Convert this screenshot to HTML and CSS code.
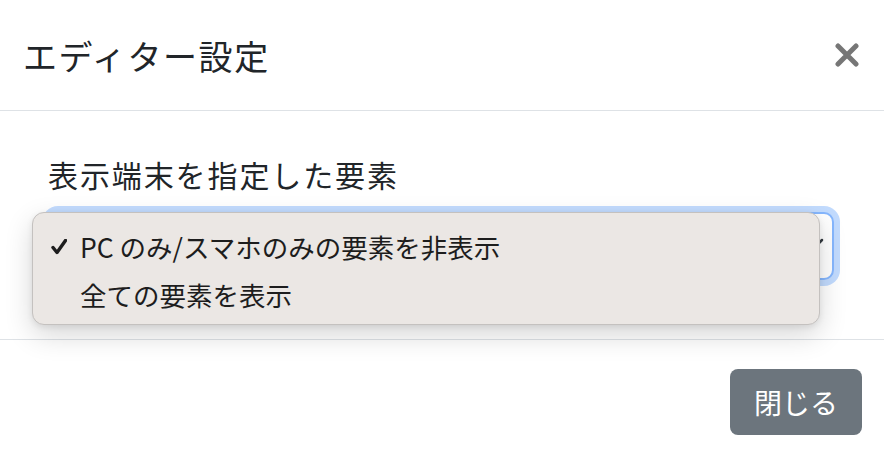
FILE: index.html
```html
<!DOCTYPE html>
<html lang="ja">
<head>
<meta charset="utf-8">
<title>エディター設定</title>
<link rel="stylesheet" href="styles.css">
</head>
<body>
<div class="modal">
  <div class="modal-header">
    <h5 class="modal-title">エディター設定</h5>
    <button class="btn-close" type="button" aria-label="Close">
      <svg viewBox="0 0 24 24" width="24" height="24"><path d="M3 3L21 21M21 3L3 21"/></svg>
    </button>
  </div>
  <div class="modal-body">
    <label class="form-label">表示端末を指定した要素</label>
    <div class="select-wrap">
      <div class="form-select">
        <svg class="chevron" viewBox="0 0 20 12" width="20" height="12"><path d="M2 2l8 8 8-8"/></svg>
      </div>
      <div class="popup">
        <div class="option selected">
          <svg class="check" viewBox="0 0 16 16" width="16" height="16"><path d="M2 8.5l4 5L14.5 1.5"/></svg>
          <span>PC のみ/スマホのみの要素を非表示</span>
        </div>
        <div class="option">
          <span>全ての要素を表示</span>
        </div>
      </div>
    </div>
  </div>
  <div class="modal-footer">
    <button class="btn-secondary" type="button">閉じる</button>
  </div>
</div>
</body>
</html>
```
FILE: styles.css
```css
html, body {
  margin: 0;
  padding: 0;
  background: #fff;
}
body {
  font-family: "Noto Sans CJK JP", "Noto Sans", sans-serif;
  color: #212529;
}
.modal {
  width: 884px;
  height: 464px;
  display: flex;
  flex-direction: column;
}
.modal-header {
  height: 111px;
  box-sizing: border-box;
  border-bottom: 1px solid #dee2e6;
  display: flex;
  align-items: center;
  justify-content: space-between;
  padding: 0 25px 0 23px;
}
.modal-title {
  margin: 0;
  font-size: 34px;
  font-weight: 400;
  letter-spacing: 1.6px;
  line-height: 1.2;
  padding-top: 2px;
}
.btn-close {
  border: 0;
  background: transparent;
  padding: 0;
  width: 24px;
  height: 24px;
  display: flex;
}
.btn-close svg {
  fill: none;
  stroke: #767676;
  stroke-width: 5;
  stroke-linecap: round;
}
.modal-body {
  height: 228px;
  box-sizing: border-box;
  padding: 40px 50px 0 48px;
}
.form-label {
  display: block;
  font-size: 30px;
  letter-spacing: 1.9px;
  line-height: 46px;
  margin-bottom: 15px;
}
.select-wrap {
  position: relative;
}
.form-select {
  height: 68px;
  box-sizing: border-box;
  border: 2px solid #86b7fe;
  border-radius: 10px;
  background: #fff;
  box-shadow: 0 0 0 6px rgba(13, 110, 253, .25);
  display: flex;
  align-items: center;
  justify-content: flex-end;
  padding-right: 8px;
}
.chevron {
  fill: none;
  stroke: #343a40;
  stroke-width: 2.5;
  stroke-linecap: round;
  stroke-linejoin: round;
  margin-top: -4px;
}
.popup {
  position: absolute;
  left: -16px;
  top: 0;
  width: 788px;
  height: 113px;
  box-sizing: border-box;
  background: #ebe7e4;
  border: 1px solid #c4c1bf;
  border-radius: 12px;
  box-shadow: 0 10px 28px rgba(0, 0, 0, .16), 0 2px 6px rgba(0, 0, 0, .08);
  padding: 9px 0 7px;
}
.option {
  height: 48px;
  display: flex;
  align-items: center;
  padding-left: 47px;
  position: relative;
  font-size: 26.5px;
  color: #1d1d1d;
}
.check {
  position: absolute;
  left: 18px;
  top: 17px;
  fill: none;
  stroke: #1d1d1d;
  stroke-width: 3.4;
  stroke-linecap: round;
  stroke-linejoin: round;
}
.modal-footer {
  flex: 1;
  border-top: 1px solid #dee2e6;
  display: flex;
  align-items: center;
  justify-content: flex-end;
  padding-right: 22px;
}
.btn-secondary {
  width: 132px;
  height: 66px;
  border: 0;
  border-radius: 8px;
  background: #6c757d;
  color: #fff;
  font-family: "Noto Sans CJK JP", "Noto Sans", sans-serif;
  font-size: 28px;
  padding: 0;
}
```
